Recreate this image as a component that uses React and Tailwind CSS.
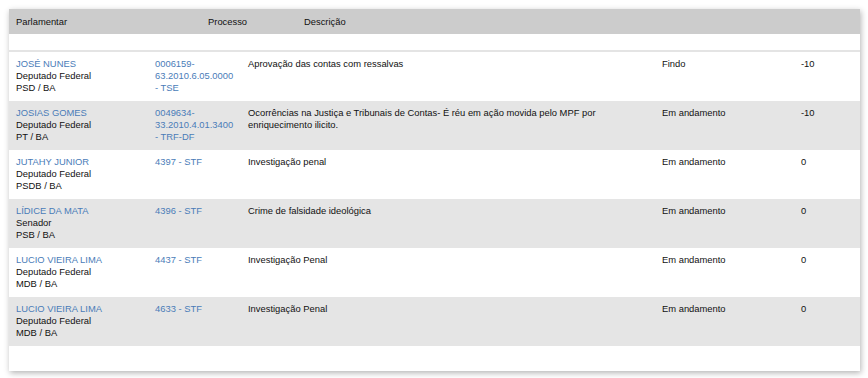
import React from "react";

const rows = [
  { name: "JOSÉ NUNES", role: "Deputado Federal", party: "PSD / BA", proc: "0006159-63.2010.6.05.0000 - TSE", desc: "Aprovação das contas com ressalvas", status: "Findo", score: "-10" },
  { name: "JOSIAS GOMES", role: "Deputado Federal", party: "PT / BA", proc: "0049634-33.2010.4.01.3400 - TRF-DF", desc: "Ocorrências na Justiça e Tribunais de Contas- É réu em ação movida pelo MPF por enriquecimento ilicito.", status: "Em andamento", score: "-10" },
  { name: "JUTAHY JUNIOR", role: "Deputado Federal", party: "PSDB / BA", proc: "4397 - STF", desc: "Investigação penal", status: "Em andamento", score: "0" },
  { name: "LÍDICE DA MATA", role: "Senador", party: "PSB / BA", proc: "4396 - STF", desc: "Crime de falsidade ideológica", status: "Em andamento", score: "0" },
  { name: "LUCIO VIEIRA LIMA", role: "Deputado Federal", party: "MDB / BA", proc: "4437 - STF", desc: "Investigação Penal", status: "Em andamento", score: "0" },
  { name: "LUCIO VIEIRA LIMA", role: "Deputado Federal", party: "MDB / BA", proc: "4633 - STF", desc: "Investigação Penal", status: "Em andamento", score: "0" },
];

export default function App() {
  return (
    <div className="w-[868px] h-[378px] bg-white pt-[9px] pl-[9px] text-[9.4px] leading-[12px] text-[#111] font-['Liberation_Sans',Arial,sans-serif]">
      <div className="w-[851px] h-[362px] bg-white shadow-[1px_2px_6px_rgba(0,0,0,0.3)] flex flex-col">
        <div className="h-[25px] bg-[#cccccc] flex items-center pl-[7px] pt-[1px]">
          <div className="w-[192px]">Parlamentar</div>
          <div className="w-[96px]">Processo</div>
          <div>Descrição</div>
        </div>
        <div className="h-[16px]" />
        <div className="h-[2px] bg-[#e4e4e4]" />
        {rows.map((r, i) => (
          <div key={i} className={`h-[49px] flex pt-[6px] pl-[7px] ${i % 2 === 1 ? "bg-[#e5e5e5]" : "bg-white"}`}>
            <div className="w-[139px] flex flex-col">
              <span className="text-[#4a7cb8]">{r.name}</span>
              <span>{r.role}</span>
              <span>{r.party}</span>
            </div>
            <div className="w-[93px] pr-[10px] text-[#4a7cb8]">{r.proc}</div>
            <div className="w-[414px] pr-[56px]">{r.desc}</div>
            <div className="w-[139px]">{r.status}</div>
            <div>{r.score}</div>
          </div>
        ))}
      </div>
    </div>
  );
}
